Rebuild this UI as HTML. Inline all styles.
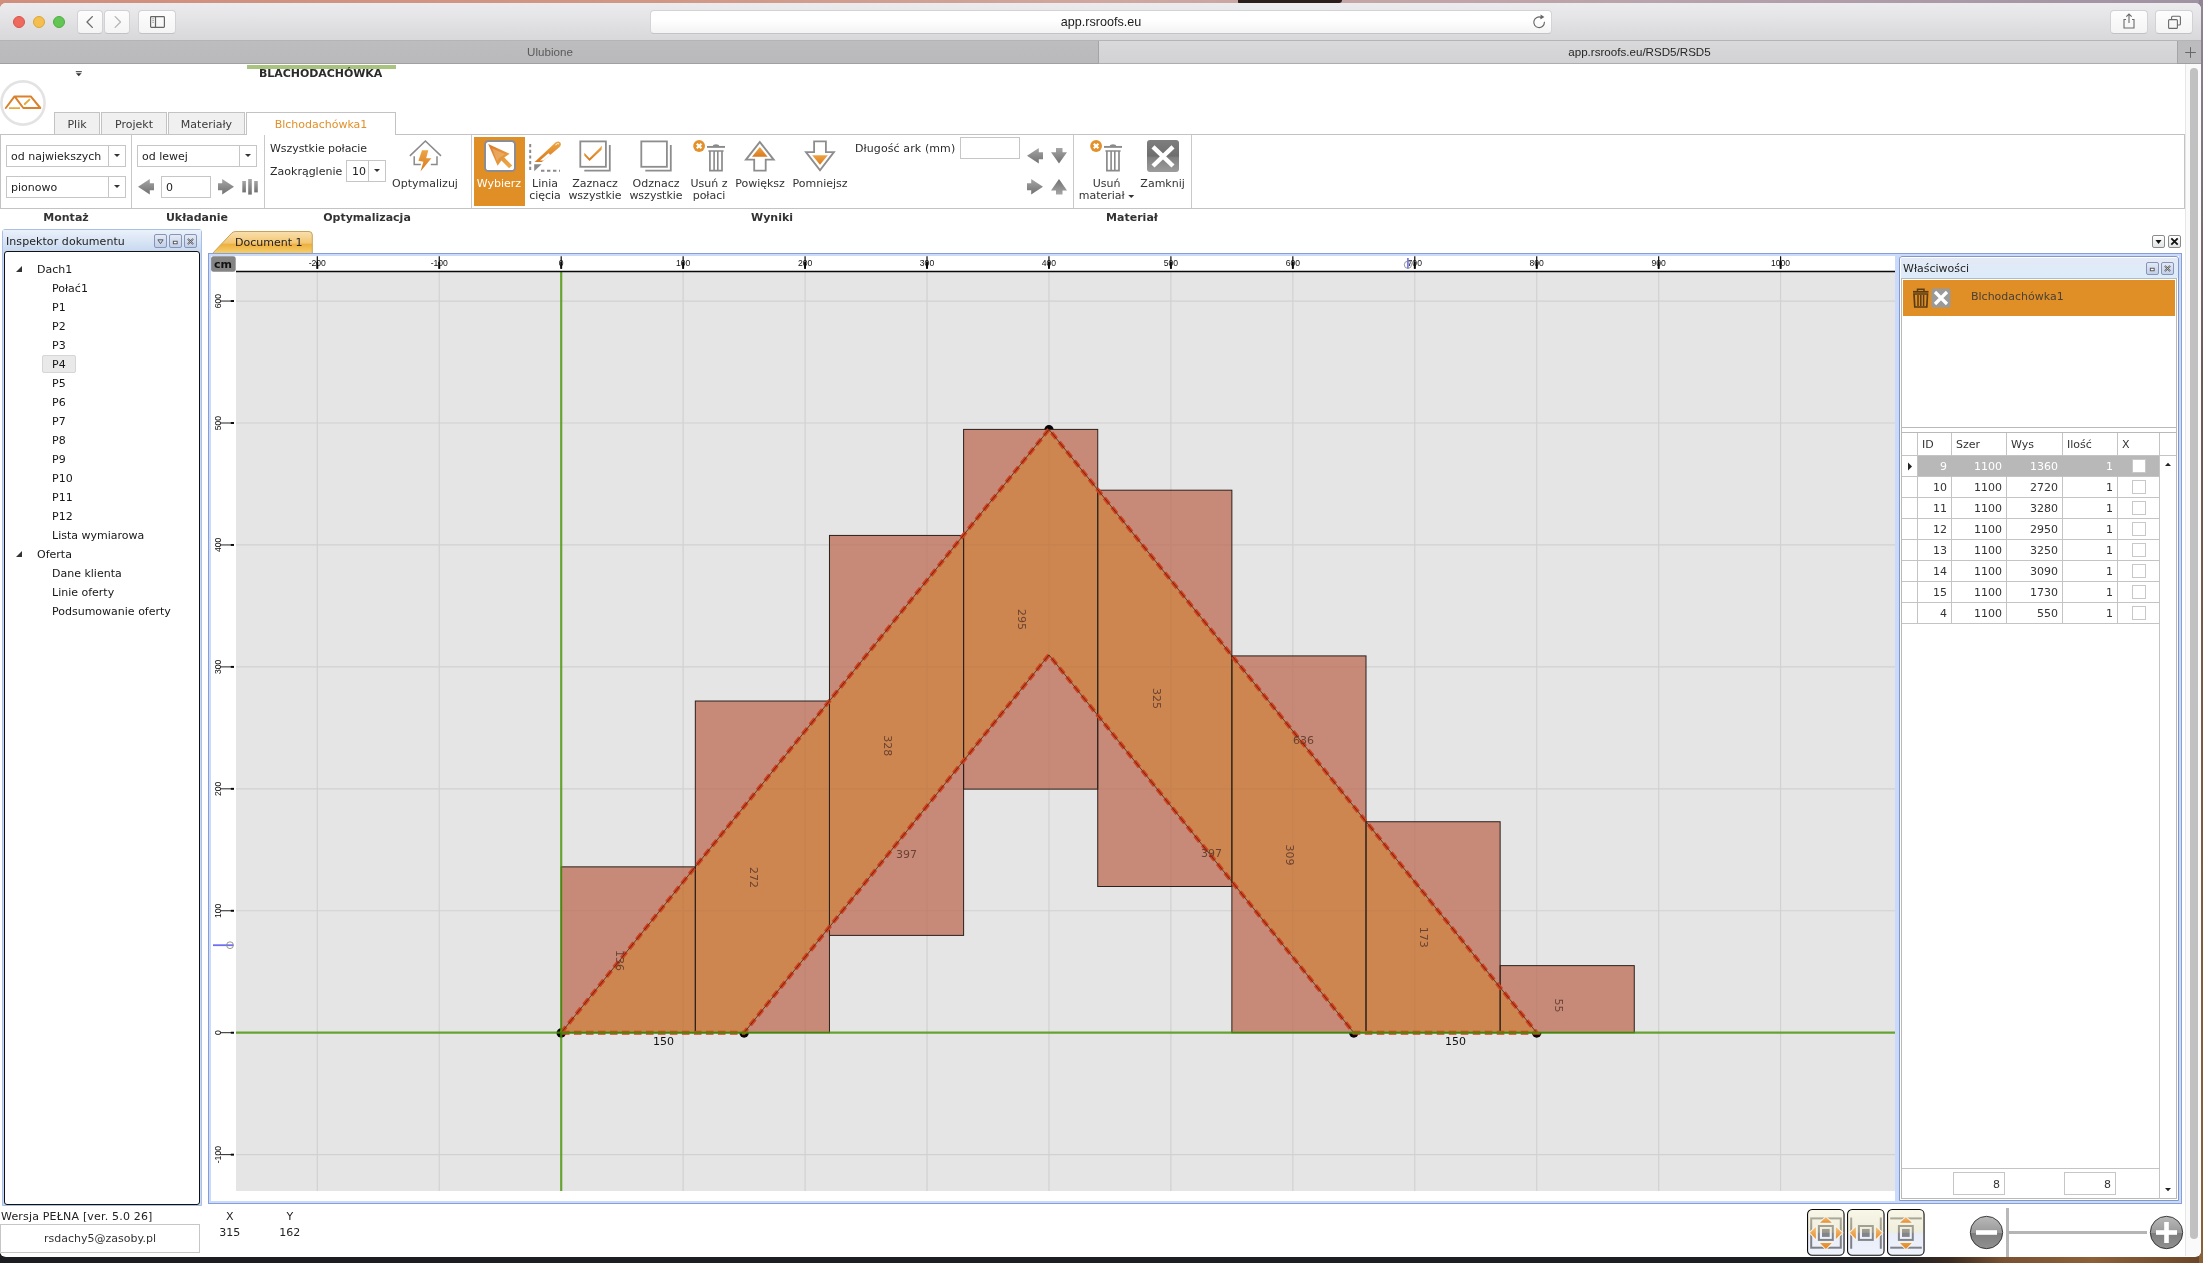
<!DOCTYPE html>
<html lang="pl">
<head>
<meta charset="utf-8">
<title>app.rsroofs.eu/RSD5/RSD5</title>
<style>
*{box-sizing:border-box;margin:0;padding:0}
html,body{width:2203px;height:1263px;overflow:hidden}
body{position:relative;background:#1d1a19;font-family:"DejaVu Sans","Liberation Sans",sans-serif;font-size:11px;color:#2b2b2b}
.abs{position:absolute}
#desk-top{left:0;top:0;width:2203px;height:10px;background:linear-gradient(90deg,#cf8f7c 0%,#d19785 30%,#cfa79f 50%,#b9a3ac 75%,#9f92a2 100%)}
#desk-blob{left:1238px;top:0;width:104px;height:3px;background:#2a1c18;border-radius:0 0 40px 10px}
#desk-bottom{left:0;top:1250px;width:2203px;height:13px;background:linear-gradient(90deg,#1c1d21 0%,#1e1f23 86%,#3a2a20 88.5%,#7a5232 91%,#8c6038 95%,#6a4528 100%)}
#desk-right{left:2199px;top:0;width:4px;height:1263px;background:linear-gradient(180deg,#8f8595 0%,#6c5a5a 30%,#7a5a43 60%,#8a6038 100%)}
#win{will-change:transform;left:0;top:3px;width:2201px;height:1254px;background:#fff;border-radius:6px 6px 6px 6px;overflow:hidden}
/* safari chrome */
#sbar{left:0;top:0;width:2201px;height:38px;background:linear-gradient(180deg,#ececee 0%,#e2e2e4 50%,#d8d8da 100%);border-bottom:1px solid #b4b4b6}
.tl{position:absolute;top:13px;width:12px;height:12px;border-radius:50%}
.sbtn{position:absolute;top:7.3px;height:23.4px;background:linear-gradient(180deg,#fdfdfd,#f4f4f4);border:1px solid #d2d2d4;border-bottom-color:#c2c2c4;border-radius:4px}
#url{left:650px;top:7.3px;width:902px;height:23.4px;background:linear-gradient(180deg,#fff 40%,#f3f3f3);border:1px solid #d4d4d6;border-bottom-color:#c4c4c6;border-radius:4px;font-family:"Liberation Sans",sans-serif;font-size:12.6px;color:#1c1c1c;text-align:center;line-height:22.5px}
#tabs{left:0;top:38px;width:2201px;height:23px;font-family:"Liberation Sans",sans-serif;font-size:11.6px;line-height:22px;text-align:center}
#tab1{left:0;top:0;width:1099px;height:23px;background:linear-gradient(180deg,#bdbdbf,#b9b9bb);color:#5a5a5a;border-right:1px solid #a4a4a6;border-bottom:1px solid #a0a0a2}
#tab2{left:1099px;top:0;width:1078px;height:23px;background:linear-gradient(180deg,#d9d9db,#d2d2d4);color:#262626;border-bottom:1px solid #adadaf}
#tabp{left:2177px;top:0;width:24px;height:23px;background:#bcbcbe;border-left:1px solid #a4a4a6;border-bottom:1px solid #a0a0a2}
</style>
</head>
<body>
<div id="desk-top" class="abs"></div>
<div id="desk-blob" class="abs"></div>
<div id="desk-bottom" class="abs"></div>
<div id="desk-right" class="abs"></div>
<div id="win" class="abs">
<!--CHROME-->
<div id="sbar" class="abs">
  <div class="tl" style="left:13px;background:#ee6a5f;border:0.5px solid #d8544a"></div>
  <div class="tl" style="left:33px;background:#f5bf4f;border:0.5px solid #dba53a"></div>
  <div class="tl" style="left:53px;background:#62c554;border:0.5px solid #4fae42"></div>
  <div class="sbtn" style="left:77px;width:26px"><svg width="24" height="22" viewBox="0 -1 24 22"><path d="M14.3 4.6 L9 10 L14.3 15.4" fill="none" stroke="#6c6c6c" stroke-width="1.35" stroke-linecap="round" stroke-linejoin="round"/></svg></div>
  <div class="sbtn" style="left:104px;width:26px"><svg width="24" height="22" viewBox="0 -1 24 22"><path d="M10.2 4.6 L15.5 10 L10.2 15.4" fill="none" stroke="#b6b6b6" stroke-width="1.35" stroke-linecap="round" stroke-linejoin="round"/></svg></div>
  <div class="sbtn" style="left:138px;width:38px"><svg width="36" height="22" viewBox="0 -1 36 22"><rect x="11.6" y="4.6" width="13.8" height="10.8" rx="0.8" fill="none" stroke="#666" stroke-width="1.2"/><path d="M16.5 4.6 V15.4" stroke="#666" stroke-width="1.2"/><path d="M13.2 6.8h1.8M13.2 8.6h1.8M13.2 10.4h1.8" stroke="#777" stroke-width="0.6"/></svg></div>
  <div id="url" class="abs">app.rsroofs.eu</div>
  <svg class="abs" style="left:1531px;top:11px" width="16" height="16" viewBox="0 0 16 16"><path d="M10.2 3.4 A5.3 5.3 0 1 0 13.4 8.2" fill="none" stroke="#666" stroke-width="1.15" stroke-linecap="round"/><path d="M9.6 0.6 L13.4 3.1 L9.4 5.6 Z" fill="#666"/></svg>
  <div class="sbtn" style="left:2110.3px;width:38px"><svg width="36" height="22" viewBox="0 -1 36 22"><path d="M15 7.5h-2v8.5h10v-8.5h-2" fill="none" stroke="#6a6a6a" stroke-width="1.1"/><path d="M18 2.2V11M15.3 4.6 18 2 20.7 4.6" fill="none" stroke="#6a6a6a" stroke-width="1.1"/></svg></div>
  <div class="sbtn" style="left:2155.2px;width:38px"><svg width="36" height="22" viewBox="0 -1 36 22"><rect x="12.6" y="7.6" width="8.8" height="8.8" rx="1" fill="none" stroke="#6a6a6a" stroke-width="1.1"/><path d="M15.6 7.4V5.2a1 1 0 0 1 1-1h6.8a1 1 0 0 1 1 1V12a1 1 0 0 1-1 1h-2" fill="none" stroke="#6a6a6a" stroke-width="1.1"/></svg></div>
</div>
<div id="tabs" class="abs">
  <div id="tab1" class="abs" style="padding-left:2px">Ulubione</div>
  <div id="tab2" class="abs" style="padding-left:3px">app.rsroofs.eu/RSD5/RSD5</div>
  <div id="tabp" class="abs"><svg width="24" height="22" viewBox="0 0 24 22"><path d="M12.5 6.2v10.6M7.2 11.5h10.6" stroke="#666" stroke-width="1"/></svg></div>
</div>
<!--APP-->
<style>
#app{left:0;top:61px;width:2185px;height:1192px;background:#fff}
.t{position:absolute;white-space:nowrap;line-height:13px}
.b{font-weight:bold}
.c{text-align:center;transform:translateX(-50%)}
.rtab{position:absolute;top:48px;height:22px;background:#f0f0f0;border:1px solid #c3c3c3;border-bottom:none;text-align:center;line-height:23px;color:#3a3a3a}
.combo{position:absolute;height:22px;border:1px solid #c6c6c6;background:#fff;line-height:21px;padding-left:4px;color:#222}
.combo i{position:absolute;right:0;top:0;bottom:0;width:17px;border-left:1px solid #c6c6c6}
.combo i:after{content:"";position:absolute;left:5px;top:8px;border:3px solid transparent;border-top:3.5px solid #333;border-bottom:none}
.sep{position:absolute;top:71px;height:73px;width:1px;background:#c9c9c9}
.ico{position:absolute;top:76px;width:32px;height:32px;overflow:visible}
.lbl{position:absolute;text-align:center;line-height:12px;white-space:nowrap;transform:translateX(-50%);color:#333}
.glbl{position:absolute;top:147px;font-weight:bold;transform:translateX(-50%);white-space:nowrap;color:#333}
</style>
<div id="app" class="abs">
<svg width="0" height="0" style="position:absolute"><defs>
<linearGradient id="gg" x1="0" y1="0" x2="0" y2="1"><stop offset="0" stop-color="#a6a6a6"/><stop offset="1" stop-color="#707070"/></linearGradient>
<linearGradient id="og" x1="0" y1="0" x2="0.5" y2="1"><stop offset="0" stop-color="#eda544"/><stop offset="1" stop-color="#d8791f"/></linearGradient>
<linearGradient id="og2" x1="0" y1="0" x2="0" y2="1"><stop offset="0" stop-color="#eda544"/><stop offset="1" stop-color="#d8791f"/></linearGradient>
<linearGradient id="og3" x1="0" y1="0" x2="1" y2="1"><stop offset="0" stop-color="#d9792a"/><stop offset="1" stop-color="#ecae4c"/></linearGradient>
<linearGradient id="xg" x1="0" y1="0" x2="0" y2="1"><stop offset="0" stop-color="#7e7e7e"/><stop offset="0.5" stop-color="#6e6e6e"/><stop offset="0.55" stop-color="#808080"/><stop offset="1" stop-color="#9c9c9c"/></linearGradient>
<g id="trash"><circle cx="6.1" cy="6" r="5.9" fill="#e4912c"/><path d="M3.8 3.7 L8.4 8.3 M8.4 3.7 L3.8 8.3" stroke="#fff" stroke-width="2.2"/><path d="M14 6.9 H32" stroke="#8a8a8a" stroke-width="1.9"/><path d="M19.8 6.2 Q20 4.3 23 4.3 Q26 4.3 26.2 6.2Z" fill="#8a8a8a"/><path d="M15.4 11 H30.6" stroke="#8a8a8a" stroke-width="1.5"/><path d="M16.9 11 V30.7 H29 V11" fill="none" stroke="#8a8a8a" stroke-width="1.7"/><path d="M21.1 11 V30.5 M24.8 11 V30.5" stroke="#8a8a8a" stroke-width="1.6"/></g>
<path id="arL" d="M0 7.8 L11.8 0 V4.2 H16 V11.2 H11.8 V15.6 Z" fill="url(#gg)"/>
<path id="arD" d="M8 15.6 L0 4.2 H5 V0 H11.5 V4.2 H16 Z" fill="url(#gg)"/>
</defs></svg>
<!-- header -->
<svg class="abs" style="left:75px;top:7px" width="8" height="6" viewBox="0 0 8 6"><path d="M0.8 0.7h6" stroke="#333" stroke-width="1"/><path d="M1 2.3h5.6L3.8 5.2z" fill="#333"/></svg>
<div class="abs" style="left:247px;top:1px;width:149px;height:4px;background:#a8c47f"></div>
<div class="t b" style="left:259px;top:3px;font-size:11px;color:#2b2b2b;letter-spacing:-0.05px">BLACHODACHÓWKA</div>
<svg class="abs" style="left:0;top:16px" width="48" height="48" viewBox="0 0 48 48">
 <circle cx="23" cy="23" r="21.6" fill="#fff" stroke="#e3e3e3" stroke-width="2.6"/>
 <path d="M5.8 28 L14.5 16.4 H30.8 L40.3 28 H23.3 L15 16.8" fill="none" stroke="#d9822b" stroke-width="2" stroke-linejoin="round" stroke-linecap="round"/>
 <path d="M9 28.2 H20" stroke="#e8a83c" stroke-width="1.8"/>
 <path d="M24.8 24 L29.4 19.6" stroke="#e8a83c" stroke-width="2" stroke-linecap="round"/>
</svg>
<!-- ribbon tabs -->
<div class="rtab" style="left:54px;width:46px">Plik</div>
<div class="rtab" style="left:101px;width:66px">Projekt</div>
<div class="rtab" style="left:168px;width:77px">Materiały</div>
<div class="abs" style="left:0;top:70px;width:2185px;height:75px;border:1px solid #c3c3c3;background:#fff"></div>
<div class="rtab" style="left:246px;width:150px;background:#fff;height:23px;color:#e0902a">Blchodachówka1</div>
<!-- group Montaz -->
<div class="combo" style="left:6px;top:81px;width:120px">od najwiekszych<i></i></div>
<div class="combo" style="left:6px;top:112px;width:120px">pionowo<i></i></div>
<div class="sep" style="left:131px"></div>
<!-- group Ukladanie -->
<div class="combo" style="left:137px;top:81px;width:120px">od lewej<i></i></div>
<svg class="abs" style="left:138px;top:115px" width="16" height="16" viewBox="0 0 16 16"><use href="#arL"/></svg>
<div class="combo" style="left:161px;top:112px;width:50px">0</div>
<svg class="abs" style="left:218px;top:115px" width="16" height="16" viewBox="0 0 16 16"><use href="#arL" transform="translate(16 0) scale(-1 1)"/></svg>
<svg class="abs" style="left:241.8px;top:115px" width="18" height="16" viewBox="0 0 18 16"><rect x="0.3" y="2" width="3.6" height="11.4" fill="url(#gg)"/><rect x="6.2" y="0" width="3.6" height="15.6" fill="url(#gg)"/><rect x="12.2" y="2" width="3.6" height="11.4" fill="url(#gg)"/></svg>
<div class="sep" style="left:264px"></div>
<!-- group Optymalizacja -->
<div class="t" style="left:270px;top:78px;letter-spacing:-0.06px">Wszystkie połacie</div>
<div class="t" style="left:270px;top:101px">Zaokrąglenie</div>
<div class="combo" style="left:346px;top:96px;width:40px;padding-left:5px">10<i></i></div>
<svg class="ico" style="left:409.4px" viewBox="0 0 32 32">
 <path d="M0.9 15.9 L16.4 1 L32 15.9" fill="none" stroke="#8a8a8a" stroke-width="1.5"/>
 <path d="M5.2 16.2 V24.6 H11.8 M21.8 24.6 H28 V16.2" fill="none" stroke="#8a8a8a" stroke-width="1.5"/>
 <path d="M13 10.2 H19.3 L17.2 18.3 H22.4 L11.5 31.6 L14.4 21.7 L9.4 20.8 Z" fill="url(#og2)"/>
</svg>
<div class="lbl" style="left:425px;top:114px">Optymalizuj</div>
<div class="sep" style="left:471px"></div>
<!-- group Wyniki -->
<div class="abs" style="left:474px;top:73px;width:51px;height:69px;background:#e08f27"></div>
<svg class="ico" style="left:484px" viewBox="0 0 32 32"><rect x="1" y="1" width="30" height="30" rx="3.6" fill="#fff" stroke="#8d8d8d" stroke-width="2"/><path d="M4.2 3.9 L25.6 13.8 L20.3 17.6 L28.2 25.4 L25.1 28.2 L17.4 20.5 L13.6 25.8 Z" fill="url(#og3)"/><path d="M8 8.2 L21 14.2 L15 18 L13 21.2 Z" fill="#f3c489" fill-opacity="0.45"/></svg>
<div class="lbl" style="left:499px;top:114px;color:#fff">Wybierz</div>
<svg class="ico" style="left:529px" viewBox="0 0 32 32"><path d="M1.2 4 V31.6" fill="none" stroke="#8a8a8a" stroke-width="2" stroke-dasharray="3.2 2.5"/><path d="M12 30.8 H31" fill="none" stroke="#8a8a8a" stroke-width="2" stroke-dasharray="3.4 2.6"/><path d="M5.2 24.3 H12.6 L5.2 31.2 Z" fill="#8a8a8a"/><path d="M5.6 22 L26.5 2.6 Q29.4 0.6 31.2 2.5 Q32.8 4.6 30.6 7 L12.8 22 Z" fill="url(#og2)"/><path d="M11 20.6 L19.5 13.2 L21.4 15.1 L14.6 20.6 Z" fill="#fff"/><path d="M26.8 4.6 Q28.6 3 29.6 3.6" fill="none" stroke="#fff" stroke-width="1" stroke-linecap="round"/></svg>
<div class="lbl" style="left:545px;top:114px">Linia<br>cięcia</div>
<svg class="ico" style="left:579px" viewBox="0 0 32 32"><path d="M5.3 30.6 H30.8 V5" fill="none" stroke="#8d8d8d" stroke-width="1.8"/><rect x="1.3" y="1.4" width="25.6" height="25.4" fill="#fff" stroke="#8d8d8d" stroke-width="1.8"/><path d="M5.3 12.8 L10.5 18.2 L23 5.7 L22.5 9.7 L10.5 20.9 L5.3 15.4 Z" fill="url(#og2)"/></svg>
<div class="lbl" style="left:595px;top:114px">Zaznacz<br>wszystkie</div>
<svg class="ico" style="left:639.8px" viewBox="0 0 32 32"><path d="M5.3 30.6 H30.8 V5" fill="none" stroke="#8d8d8d" stroke-width="1.8"/><rect x="1.3" y="1.4" width="25.6" height="25.4" fill="#fff" stroke="#8d8d8d" stroke-width="1.8"/></svg>
<div class="lbl" style="left:656px;top:114px">Odznacz<br>wszystkie</div>
<svg class="ico" style="left:693px" viewBox="0 0 32 32"><use href="#trash"/></svg>
<div class="lbl" style="left:709px;top:114px">Usuń z<br>połaci</div>
<svg class="ico" style="left:744.2px" viewBox="0 0 32 32"><path d="M15.8 0.4 L31.6 20.6 H22.6 V31.6 H9.3 V20.6 H0 Z" fill="#8d8d8d"/><path d="M15.8 3.5 L27.7 18.8 H20.8 V29.8 H11.1 V18.8 H3.9 Z" fill="#fff"/><path d="M15.8 7 L23.6 16.8 H8 Z" fill="url(#og2)"/></svg>
<div class="lbl" style="left:760px;top:114px">Powiększ</div>
<svg class="ico" style="left:804px" viewBox="0 0 32 32"><path d="M16 31.7 L31.8 11.2 H22.8 V0.4 H9.2 V11.2 H0.1 Z" fill="#8d8d8d"/><path d="M16 28.7 L28 13 H21 V2.2 H11 V13 H3.9 Z" fill="#fff"/><path d="M16 24.8 L23.8 15.2 H8.2 Z" fill="url(#og2)"/></svg>
<div class="lbl" style="left:820px;top:114px">Pomniejsz</div>
<div class="t" style="left:855px;top:78px;letter-spacing:0.1px">Długość ark (mm)</div>
<div class="abs" style="left:960px;top:73px;width:60px;height:22px;border:1px solid #c6c6c6;background:#fff"></div>
<svg class="abs" style="left:1027px;top:84.3px" width="16" height="16" viewBox="0 0 16 16"><use href="#arL"/></svg>
<svg class="abs" style="left:1051px;top:84.3px" width="16" height="16" viewBox="0 0 16 16"><use href="#arD"/></svg>
<svg class="abs" style="left:1027px;top:115.3px" width="16" height="16" viewBox="0 0 16 16"><use href="#arL" transform="translate(16 0) scale(-1 1)"/></svg>
<svg class="abs" style="left:1051px;top:115.3px" width="16" height="16" viewBox="0 0 16 16"><use href="#arD" transform="translate(0 15.6) scale(1 -1)"/></svg>
<div class="sep" style="left:1073px"></div>
<!-- group Material -->
<svg class="ico" style="left:1089.8px" viewBox="0 0 32 32"><use href="#trash"/></svg>
<div class="lbl" style="left:1106.5px;top:114px">Usuń<br>materiał&nbsp;<span style="display:inline-block;border:3px solid transparent;border-top:3.5px solid #333;border-bottom:none;vertical-align:1px"></span></div>
<svg class="ico" style="left:1147px" viewBox="0 0 32 32"><rect x="0" y="0.1" width="32" height="31.9" rx="3" fill="url(#xg)"/><path d="M6 6.8 L26 26 M26 6.8 L6 26" stroke="#fff" stroke-width="4.4"/></svg>
<div class="lbl" style="left:1162.6px;top:114px">Zamknij</div>
<div class="sep" style="left:1191px"></div>
<!-- group labels -->
<div class="glbl" style="left:66px">Montaż</div>
<div class="glbl" style="left:197px">Układanie</div>
<div class="glbl" style="left:367px">Optymalizacja</div>
<div class="glbl" style="left:772px">Wyniki</div>
<div class="glbl" style="left:1132px">Materiał</div>
<!--RIBBONEND-->
<style>
.pbtn{position:absolute;width:13px;height:13.6px;border:1px solid #8794b6;border-radius:2px;background:linear-gradient(180deg,#e3eaf6,#c1cfe8);padding-top:0.8px}
.tree{position:absolute;left:0;margin-top:1.7px;line-height:19px;height:19px;white-space:nowrap;color:#161616}
.hd{position:absolute;background:linear-gradient(180deg,#eaf1fa 0%,#dbe6f5 45%,#c6d8ef 100%)}
.rl{font-family:"Liberation Sans",sans-serif;font-size:8.6px;fill:#111}
.gcell{position:absolute;height:21px;border-right:1px solid #c4c4c4;border-bottom:1px solid #c4c4c4;line-height:21px;text-align:right;padding-right:4px;color:#333}
.ghd{position:absolute;top:0;height:23px;border-right:1px solid #c4c4c4;border-bottom:1px solid #c4c4c4;line-height:23px;padding-left:4px;color:#333}
.chk{position:absolute;left:14px;top:2.7px;width:14px;height:14px;border:1px solid #c8c8c8;background:#fff}
</style>
<div class="abs" style="left:2px;top:165px;width:200px;height:977px;border:1px solid #a9bfe4;border-radius:3px 3px 0 0;background:#c9daf2"></div>
<div class="hd" style="left:3px;top:166px;width:198px;height:22px"></div>
<div class="t" style="left:6px;top:170.7px;color:#222;letter-spacing:0.07px">Inspektor dokumentu</div>
<div class="pbtn" style="left:154px;top:170px"><svg width="11" height="11" viewBox="0 0 11.5 11.5" style="display:block"><path d="M3 4h5.5L5.75 8z" fill="none" stroke="#555" stroke-width="1"/></svg></div>
<div class="pbtn" style="left:169px;top:170px"><svg width="11" height="11" viewBox="0 0 11.5 11.5" style="display:block"><rect x="3.5" y="5.5" width="4" height="2.6" fill="#fff" stroke="#555" stroke-width="1"/></svg></div>
<div class="pbtn" style="left:184px;top:170px"><svg width="11" height="11" viewBox="0 0 11.5 11.5" style="display:block"><path d="M3 3l5.5 5.5M8.5 3L3 8.5" stroke="#555" stroke-width="1.8"/><path d="M3 3l5.5 5.5M8.5 3L3 8.5" stroke="#ddd" stroke-width="0.6"/></svg></div>
<div class="abs" style="left:4px;top:187px;width:196px;height:953.8px;border:1.3px solid #111;border-radius:3px;background:#fff"></div>
<svg class="abs" style="left:15px;top:201.3px" width="8" height="8" viewBox="0 0 8 8"><path d="M7 1V7H1z" fill="#333"/></svg>
<div class="tree" style="left:37px;top:194.5px">Dach1</div>
<div class="tree" style="left:52px;top:213.5px">Połać1</div>
<div class="tree" style="left:52px;top:232.5px">P1</div>
<div class="tree" style="left:52px;top:251.5px">P2</div>
<div class="tree" style="left:52px;top:270.5px">P3</div>
<div class="abs" style="left:42px;top:290.5px;width:34px;height:18px;background:#e9e9e9;border:1px solid #d6d6d6;border-radius:2px"></div>
<div class="tree" style="left:52px;top:289.5px">P4</div>
<div class="tree" style="left:52px;top:308.5px">P5</div>
<div class="tree" style="left:52px;top:327.5px">P6</div>
<div class="tree" style="left:52px;top:346.5px">P7</div>
<div class="tree" style="left:52px;top:365.5px">P8</div>
<div class="tree" style="left:52px;top:384.5px">P9</div>
<div class="tree" style="left:52px;top:403.5px">P10</div>
<div class="tree" style="left:52px;top:422.5px">P11</div>
<div class="tree" style="left:52px;top:441.5px">P12</div>
<div class="tree" style="left:52px;top:460.5px">Lista wymiarowa</div>
<svg class="abs" style="left:15px;top:486.3px" width="8" height="8" viewBox="0 0 8 8"><path d="M7 1V7H1z" fill="#333"/></svg>
<div class="tree" style="left:37px;top:479.5px">Oferta</div>
<div class="tree" style="left:52px;top:498.5px">Dane klienta</div>
<div class="tree" style="left:52px;top:517.5px">Linie oferty</div>
<div class="tree" style="left:52px;top:536.5px">Podsumowanie oferty</div>
<svg class="abs" style="left:209px;top:166px" width="108" height="26" viewBox="0 0 108 26"><defs><linearGradient id="tg" x1="0" y1="0" x2="0" y2="1"><stop offset="0" stop-color="#f8e0b0"/><stop offset="0.5" stop-color="#f3c672"/><stop offset="0.56" stop-color="#eeb040"/><stop offset="1" stop-color="#f5d475"/></linearGradient></defs><path d="M2.5 24.5 L23 2.8 Q24.5 1.5 27 1.5 H100 Q103.3 1.5 103.3 5 V24.5 Z" fill="url(#tg)" stroke="#c9a25a" stroke-width="1"/></svg>
<div class="t" style="left:235px;top:172px;color:#222">Document 1</div>
<div class="abs" style="left:2152px;top:171px;width:13px;height:13px;border:1px solid #8a8a8a;border-radius:2px;background:linear-gradient(180deg,#fff,#e4e4e4)"><svg width="11" height="11" viewBox="0 0 11 11" style="display:block"><path d="M2.5 4h6L5.5 8z" fill="#111"/></svg></div>
<div class="abs" style="left:2168px;top:171px;width:13px;height:13px;border:1px solid #8a8a8a;border-radius:2px;background:linear-gradient(180deg,#fff,#e4e4e4)"><svg width="11" height="11" viewBox="0 0 11 11" style="display:block"><path d="M2.3 2.3l6.4 6.4M8.7 2.3L2.3 8.7" stroke="#111" stroke-width="1.8"/></svg></div>
<div class="abs" style="left:208px;top:189px;width:1974px;height:951px;border:1px solid #879fd6;box-shadow:inset 0 0 0 2px #c9dafa;background:#fff"></div>
<!--CANVAS-->
<svg class="abs" style="left:209px;top:191px" width="1688" height="945" viewBox="0 0 1688 945" font-family="DejaVu Sans, sans-serif">
<rect x="27" y="17" width="1659" height="919" fill="#e5e5e5"/>
<path d="M108.32 17V936M230.26 17V936M352.2 17V936M474.14 17V936M596.08 17V936M718.02 17V936M839.96 17V936M961.9 17V936M1083.84 17V936M1205.78 17V936M1327.72 17V936M1449.66 17V936M1571.6 17V936M27 899.64H1686M27 777.7H1686M27 655.76H1686M27 533.82H1686M27 411.88H1686M27 289.94H1686M27 168.0H1686M27 46.06H1686" stroke="#d9d9d9" stroke-width="1.2" fill="none"/>
<circle cx="352.2" cy="778.0" r="4.7" fill="#050505"/>
<circle cx="535.11" cy="778.0" r="4.7" fill="#050505"/>
<circle cx="1144.81" cy="778.0" r="4.7" fill="#050505"/>
<circle cx="1327.72" cy="778.0" r="4.7" fill="#050505"/>
<circle cx="839.96" cy="174.7" r="4.7" fill="#050505"/>
<rect x="352.2" y="611.86" width="134.13" height="165.84" fill="#c88a78"/>
<rect x="486.33" y="446.02" width="134.13" height="331.68" fill="#c88a78"/>
<rect x="620.47" y="280.43" width="134.13" height="399.96" fill="#c88a78"/>
<rect x="754.6" y="174.4" width="134.13" height="359.72" fill="#c88a78"/>
<rect x="888.74" y="235.19" width="134.13" height="396.31" fill="#c88a78"/>
<rect x="1022.87" y="400.91" width="134.13" height="376.79" fill="#c88a78"/>
<rect x="1157.0" y="566.74" width="134.13" height="210.96" fill="#c88a78"/>
<rect x="1291.14" y="710.63" width="134.13" height="67.07" fill="#c88a78"/>
<polygon points="352.2,777.7 839.96,174.4 1327.72,777.7 1144.81,777.7 839.96,399.93 535.11,777.7" fill="#cd8650"/>
<path d="M108.32 17V936M230.26 17V936M352.2 17V936M474.14 17V936M596.08 17V936M718.02 17V936M839.96 17V936M961.9 17V936M1083.84 17V936M1205.78 17V936M1327.72 17V936M1449.66 17V936M1571.6 17V936M27 899.64H1686M27 777.7H1686M27 655.76H1686M27 533.82H1686M27 411.88H1686M27 289.94H1686M27 168.0H1686M27 46.06H1686" stroke="#000" stroke-opacity="0.035" stroke-width="1.2" fill="none"/>
<rect x="352.2" y="611.86" width="134.13" height="165.84" fill="none" stroke="#2b211c" stroke-width="1"/>
<rect x="486.33" y="446.02" width="134.13" height="331.68" fill="none" stroke="#2b211c" stroke-width="1"/>
<rect x="620.47" y="280.43" width="134.13" height="399.96" fill="none" stroke="#2b211c" stroke-width="1"/>
<rect x="754.6" y="174.4" width="134.13" height="359.72" fill="none" stroke="#2b211c" stroke-width="1"/>
<rect x="888.74" y="235.19" width="134.13" height="396.31" fill="none" stroke="#2b211c" stroke-width="1"/>
<rect x="1022.87" y="400.91" width="134.13" height="376.79" fill="none" stroke="#2b211c" stroke-width="1"/>
<rect x="1157.0" y="566.74" width="134.13" height="210.96" fill="none" stroke="#2b211c" stroke-width="1"/>
<rect x="1291.14" y="710.63" width="134.13" height="67.07" fill="none" stroke="#2b211c" stroke-width="1"/>
<polygon points="352.2,777.7 839.96,174.4 1327.72,777.7 1144.81,777.7 839.96,399.93 535.11,777.7" fill="none" stroke="#d2411f" stroke-width="4" stroke-dasharray="7.6 4.4"/>
<polygon points="352.2,777.7 839.96,174.4 1327.72,777.7 1144.81,777.7 839.96,399.93 535.11,777.7" fill="none" stroke="#4a2616" stroke-width="0.8"/>
<path d="M352.2 17V936M27 777.7H1686" stroke="#4a9608" stroke-opacity="0.8" stroke-width="2.2" fill="none"/>
<text x="410.7" y="709.6" font-size="11" text-anchor="middle" fill="#5e3a2c" fill-opacity="0.9" transform="rotate(90 410.7 705.6)">136</text>
<text x="544.7" y="626.5" font-size="11" text-anchor="middle" fill="#5e3a2c" fill-opacity="0.9" transform="rotate(90 544.7 622.5)">272</text>
<text x="679.2" y="494.7" font-size="11" text-anchor="middle" fill="#5e3a2c" fill-opacity="0.9" transform="rotate(90 679.2 490.7)">328</text>
<text x="697.6" y="602.5" font-size="11" text-anchor="middle" fill="#5e3a2c" fill-opacity="0.9">397</text>
<text x="813.0" y="368.4" font-size="11" text-anchor="middle" fill="#5e3a2c" fill-opacity="0.9" transform="rotate(90 813.0 364.4)">295</text>
<text x="947.9" y="447.5" font-size="11" text-anchor="middle" fill="#5e3a2c" fill-opacity="0.9" transform="rotate(90 947.9 443.5)">325</text>
<text x="1094.4" y="488.8" font-size="11" text-anchor="middle" fill="#5e3a2c" fill-opacity="0.9">636</text>
<text x="1002.6" y="602.2" font-size="11" text-anchor="middle" fill="#5e3a2c" fill-opacity="0.9">397</text>
<text x="1081.3" y="603.9" font-size="11" text-anchor="middle" fill="#5e3a2c" fill-opacity="0.9" transform="rotate(90 1081.3 599.9)">309</text>
<text x="1215.3" y="686.3" font-size="11" text-anchor="middle" fill="#5e3a2c" fill-opacity="0.9" transform="rotate(90 1215.3 682.3)">173</text>
<text x="1349.8" y="754.5" font-size="11" text-anchor="middle" fill="#5e3a2c" fill-opacity="0.9" transform="rotate(90 1349.8 750.5)">55</text>
<text x="454.4" y="790.3" font-size="11" text-anchor="middle" fill="#111" fill-opacity="1">150</text>
<text x="1246.6" y="790.3" font-size="11" text-anchor="middle" fill="#111" fill-opacity="1">150</text>
<rect x="2.1" y="1.2" width="24.6" height="15.6" rx="2.4" fill="#848484"/>
<text x="13.9" y="12.7" font-size="11" font-weight="bold" text-anchor="middle" fill="#111">cm</text>
<path d="M27 16.5H1686" stroke="#0a0a0a" stroke-width="1.6"/>
<text class="rl" x="108.32" y="10.9" text-anchor="middle">-200</text>
<path d="M108.32 1.2V13.8" stroke="#0a0a0a" stroke-width="1.2"/><path d="M108.32 7V13.8" stroke="#0a0a0a" stroke-width="1.9"/>
<text class="rl" x="230.26" y="10.9" text-anchor="middle">-100</text>
<path d="M230.26 1.2V13.8" stroke="#0a0a0a" stroke-width="1.2"/><path d="M230.26 7V13.8" stroke="#0a0a0a" stroke-width="1.9"/>
<text class="rl" x="352.2" y="10.9" text-anchor="middle">0</text>
<path d="M352.2 1.2V13.8" stroke="#0a0a0a" stroke-width="1.2"/><path d="M352.2 7V13.8" stroke="#0a0a0a" stroke-width="1.9"/>
<text class="rl" x="474.14" y="10.9" text-anchor="middle">100</text>
<path d="M474.14 1.2V13.8" stroke="#0a0a0a" stroke-width="1.2"/><path d="M474.14 7V13.8" stroke="#0a0a0a" stroke-width="1.9"/>
<text class="rl" x="596.08" y="10.9" text-anchor="middle">200</text>
<path d="M596.08 1.2V13.8" stroke="#0a0a0a" stroke-width="1.2"/><path d="M596.08 7V13.8" stroke="#0a0a0a" stroke-width="1.9"/>
<text class="rl" x="718.02" y="10.9" text-anchor="middle">300</text>
<path d="M718.02 1.2V13.8" stroke="#0a0a0a" stroke-width="1.2"/><path d="M718.02 7V13.8" stroke="#0a0a0a" stroke-width="1.9"/>
<text class="rl" x="839.96" y="10.9" text-anchor="middle">400</text>
<path d="M839.96 1.2V13.8" stroke="#0a0a0a" stroke-width="1.2"/><path d="M839.96 7V13.8" stroke="#0a0a0a" stroke-width="1.9"/>
<text class="rl" x="961.9" y="10.9" text-anchor="middle">500</text>
<path d="M961.9 1.2V13.8" stroke="#0a0a0a" stroke-width="1.2"/><path d="M961.9 7V13.8" stroke="#0a0a0a" stroke-width="1.9"/>
<text class="rl" x="1083.84" y="10.9" text-anchor="middle">600</text>
<path d="M1083.84 1.2V13.8" stroke="#0a0a0a" stroke-width="1.2"/><path d="M1083.84 7V13.8" stroke="#0a0a0a" stroke-width="1.9"/>
<text class="rl" x="1205.78" y="10.9" text-anchor="middle">700</text>
<path d="M1205.78 1.2V13.8" stroke="#0a0a0a" stroke-width="1.2"/><path d="M1205.78 7V13.8" stroke="#0a0a0a" stroke-width="1.9"/>
<text class="rl" x="1327.72" y="10.9" text-anchor="middle">800</text>
<path d="M1327.72 1.2V13.8" stroke="#0a0a0a" stroke-width="1.2"/><path d="M1327.72 7V13.8" stroke="#0a0a0a" stroke-width="1.9"/>
<text class="rl" x="1449.66" y="10.9" text-anchor="middle">900</text>
<path d="M1449.66 1.2V13.8" stroke="#0a0a0a" stroke-width="1.2"/><path d="M1449.66 7V13.8" stroke="#0a0a0a" stroke-width="1.9"/>
<text class="rl" x="1571.6" y="10.9" text-anchor="middle">1000</text>
<path d="M1571.6 1.2V13.8" stroke="#0a0a0a" stroke-width="1.2"/><path d="M1571.6 7V13.8" stroke="#0a0a0a" stroke-width="1.9"/>
<text class="rl" x="8.7" y="902.74" text-anchor="middle" transform="rotate(-90 8.7 899.64)">-100</text>
<path d="M11.2 899.64H25" stroke="#222" stroke-width="1"/><path d="M21.8 899.64H25" stroke="#0a0a0a" stroke-width="1.9"/>
<text class="rl" x="8.7" y="780.8000000000001" text-anchor="middle" transform="rotate(-90 8.7 777.7)">0</text>
<path d="M11.2 777.7H25" stroke="#222" stroke-width="1"/><path d="M21.8 777.7H25" stroke="#0a0a0a" stroke-width="1.9"/>
<text class="rl" x="8.7" y="658.86" text-anchor="middle" transform="rotate(-90 8.7 655.76)">100</text>
<path d="M11.2 655.76H25" stroke="#222" stroke-width="1"/><path d="M21.8 655.76H25" stroke="#0a0a0a" stroke-width="1.9"/>
<text class="rl" x="8.7" y="536.9200000000001" text-anchor="middle" transform="rotate(-90 8.7 533.82)">200</text>
<path d="M11.2 533.82H25" stroke="#222" stroke-width="1"/><path d="M21.8 533.82H25" stroke="#0a0a0a" stroke-width="1.9"/>
<text class="rl" x="8.7" y="414.98" text-anchor="middle" transform="rotate(-90 8.7 411.88)">300</text>
<path d="M11.2 411.88H25" stroke="#222" stroke-width="1"/><path d="M21.8 411.88H25" stroke="#0a0a0a" stroke-width="1.9"/>
<text class="rl" x="8.7" y="293.04" text-anchor="middle" transform="rotate(-90 8.7 289.94)">400</text>
<path d="M11.2 289.94H25" stroke="#222" stroke-width="1"/><path d="M21.8 289.94H25" stroke="#0a0a0a" stroke-width="1.9"/>
<text class="rl" x="8.7" y="171.1" text-anchor="middle" transform="rotate(-90 8.7 168.0)">500</text>
<path d="M11.2 168.0H25" stroke="#222" stroke-width="1"/><path d="M21.8 168.0H25" stroke="#0a0a0a" stroke-width="1.9"/>
<text class="rl" x="8.7" y="49.160000000000004" text-anchor="middle" transform="rotate(-90 8.7 46.06)">600</text>
<path d="M11.2 46.06H25" stroke="#222" stroke-width="1"/><path d="M21.8 46.06H25" stroke="#0a0a0a" stroke-width="1.9"/>
<path d="M1198.9 3V13.4" stroke="#7474f4" stroke-width="1.7"/><circle cx="1198.9" cy="9.8" r="3.6" fill="none" stroke="#8a8a8a" stroke-width="0.9"/>
<path d="M4 690.2H24.3" stroke="#6f6ff2" stroke-width="1.8"/><circle cx="21" cy="690.2" r="3.4" fill="none" stroke="#8a8a8a" stroke-width="0.9"/>
</svg>
<!--/CANVAS-->
<!--PROPS-->
<div class="abs" style="left:1895px;top:192px;width:5px;height:947px;background:#c9dafa"></div>
<div class="abs" style="left:1899px;top:192px;width:280px;height:944.5px;border:1px solid #8398c8;border-radius:3px 3px 0 0;background:#fff"></div>
<div class="abs" style="left:2179px;top:192px;width:2px;height:947px;background:#c9dafa"></div>
<div class="abs" style="left:1895px;top:1136.5px;width:286px;height:2.5px;background:#c9dafa"></div>
<div class="abs" style="left:1901px;top:193.5px;width:277px;height:20.5px;background:linear-gradient(180deg,#e4e9f5,#dcecfa)"></div>
<div class="t" style="left:1903px;top:198px;color:#222">Właściwości</div>
<div class="pbtn" style="left:2146px;top:197.5px"><svg width="11" height="11" viewBox="0 0 11.5 11.5" style="display:block"><rect x="3.5" y="5.5" width="4" height="2.6" fill="#fff" stroke="#555" stroke-width="1"/></svg></div>
<div class="pbtn" style="left:2161px;top:197.5px"><svg width="11" height="11" viewBox="0 0 11.5 11.5" style="display:block"><path d="M3 3l5.5 5.5M8.5 3L3 8.5" stroke="#555" stroke-width="1.8"/><path d="M3 3l5.5 5.5M8.5 3L3 8.5" stroke="#ddd" stroke-width="0.6"/></svg></div>
<div class="abs" style="left:1901px;top:214px;width:276px;height:921px;background:#fff;border-left:1px solid #b9b9b9;border-right:1px solid #b9b9b9"></div>
<div class="abs" style="left:1901px;top:214px;width:276px;height:150px;border:1px solid #b9b9b9;background:#fff"></div>
<div class="abs" style="left:1903px;top:216px;width:272px;height:35.5px;background:#e08f27"></div>
<svg class="abs" style="left:1911px;top:223px" width="20" height="21" viewBox="0 0 20 21"><path d="M2 4.8H17.5" stroke="#5a3c14" stroke-width="1.8"/><path d="M6.5 4V2.3H13V4" fill="none" stroke="#5a3c14" stroke-width="1.5"/><path d="M3 7H16.5L15.8 20H3.8Z" fill="none" stroke="#5a3c14" stroke-width="1.7"/><path d="M7 8V19M9.8 8V19M12.6 8V19" stroke="#5a3c14" stroke-width="1.5"/></svg>
<svg class="abs" style="left:1931px;top:224px" width="20" height="20" viewBox="0 0 20 20"><rect x="0.5" y="0.5" width="19" height="19" rx="1.5" fill="#9a9a9a"/><path d="M4 4L16 16M16 4L4 16" stroke="#fff" stroke-width="3.2"/></svg>
<div class="t" style="left:1971px;top:226px;color:#4a4036">Blchodachówka1</div>
<div class="abs" style="left:1901px;top:368px;width:276px;height:767px;border:1px solid #b9b9b9;background:#fff"></div>
<div class="ghd" style="left:1902px;top:369px;width:16px;"></div>
<div class="ghd" style="left:1918px;top:369px;width:34px;">ID</div>
<div class="ghd" style="left:1952px;top:369px;width:55px;">Szer</div>
<div class="ghd" style="left:2007px;top:369px;width:56px;">Wys</div>
<div class="ghd" style="left:2063px;top:369px;width:55px;">Ilość</div>
<div class="ghd" style="left:2118px;top:369px;width:42px;">X</div>
<div class="ghd" style="left:2160px;top:369px;width:16px;border-right:none;"></div>
<div class="gcell" style="left:1902px;top:392px;width:16px"></div>
<div class="gcell" style="left:1918px;top:392px;width:34px;background:#b8b8b8;color:#fff;border-right-color:#b8b8b8;">9</div>
<div class="gcell" style="left:1952px;top:392px;width:55px;background:#b8b8b8;color:#fff;border-right-color:#b8b8b8;">1100</div>
<div class="gcell" style="left:2007px;top:392px;width:56px;background:#b8b8b8;color:#fff;border-right-color:#b8b8b8;">1360</div>
<div class="gcell" style="left:2063px;top:392px;width:55px;background:#b8b8b8;color:#fff;border-right-color:#b8b8b8;">1</div>
<div class="gcell" style="left:2118px;top:392px;width:42px;background:#b8b8b8;color:#fff;border-right-color:#b8b8b8;"><div class="chk"></div></div>
<div class="gcell" style="left:1902px;top:413px;width:16px"></div>
<div class="gcell" style="left:1918px;top:413px;width:34px;">10</div>
<div class="gcell" style="left:1952px;top:413px;width:55px;">1100</div>
<div class="gcell" style="left:2007px;top:413px;width:56px;">2720</div>
<div class="gcell" style="left:2063px;top:413px;width:55px;">1</div>
<div class="gcell" style="left:2118px;top:413px;width:42px;"><div class="chk"></div></div>
<div class="gcell" style="left:1902px;top:434px;width:16px"></div>
<div class="gcell" style="left:1918px;top:434px;width:34px;">11</div>
<div class="gcell" style="left:1952px;top:434px;width:55px;">1100</div>
<div class="gcell" style="left:2007px;top:434px;width:56px;">3280</div>
<div class="gcell" style="left:2063px;top:434px;width:55px;">1</div>
<div class="gcell" style="left:2118px;top:434px;width:42px;"><div class="chk"></div></div>
<div class="gcell" style="left:1902px;top:455px;width:16px"></div>
<div class="gcell" style="left:1918px;top:455px;width:34px;">12</div>
<div class="gcell" style="left:1952px;top:455px;width:55px;">1100</div>
<div class="gcell" style="left:2007px;top:455px;width:56px;">2950</div>
<div class="gcell" style="left:2063px;top:455px;width:55px;">1</div>
<div class="gcell" style="left:2118px;top:455px;width:42px;"><div class="chk"></div></div>
<div class="gcell" style="left:1902px;top:476px;width:16px"></div>
<div class="gcell" style="left:1918px;top:476px;width:34px;">13</div>
<div class="gcell" style="left:1952px;top:476px;width:55px;">1100</div>
<div class="gcell" style="left:2007px;top:476px;width:56px;">3250</div>
<div class="gcell" style="left:2063px;top:476px;width:55px;">1</div>
<div class="gcell" style="left:2118px;top:476px;width:42px;"><div class="chk"></div></div>
<div class="gcell" style="left:1902px;top:497px;width:16px"></div>
<div class="gcell" style="left:1918px;top:497px;width:34px;">14</div>
<div class="gcell" style="left:1952px;top:497px;width:55px;">1100</div>
<div class="gcell" style="left:2007px;top:497px;width:56px;">3090</div>
<div class="gcell" style="left:2063px;top:497px;width:55px;">1</div>
<div class="gcell" style="left:2118px;top:497px;width:42px;"><div class="chk"></div></div>
<div class="gcell" style="left:1902px;top:518px;width:16px"></div>
<div class="gcell" style="left:1918px;top:518px;width:34px;">15</div>
<div class="gcell" style="left:1952px;top:518px;width:55px;">1100</div>
<div class="gcell" style="left:2007px;top:518px;width:56px;">1730</div>
<div class="gcell" style="left:2063px;top:518px;width:55px;">1</div>
<div class="gcell" style="left:2118px;top:518px;width:42px;"><div class="chk"></div></div>
<div class="gcell" style="left:1902px;top:539px;width:16px"></div>
<div class="gcell" style="left:1918px;top:539px;width:34px;">4</div>
<div class="gcell" style="left:1952px;top:539px;width:55px;">1100</div>
<div class="gcell" style="left:2007px;top:539px;width:56px;">550</div>
<div class="gcell" style="left:2063px;top:539px;width:55px;">1</div>
<div class="gcell" style="left:2118px;top:539px;width:42px;"><div class="chk"></div></div>
<div class="abs" style="left:2159px;top:392px;width:1px;height:743px;background:#c4c4c4"></div>
<svg class="abs" style="left:1907px;top:398px" width="6" height="9" viewBox="0 0 6 9"><path d="M1 0.5L5 4.5L1 8.5z" fill="#222"/></svg>
<svg class="abs" style="left:2164px;top:397.7px" width="8" height="5" viewBox="0 0 8 5"><path d="M1 4L4 0.8L7 4z" fill="#222"/></svg>
<svg class="abs" style="left:2164px;top:1123px" width="8" height="5" viewBox="0 0 8 5"><path d="M1 1L4 4.2L7 1z" fill="#222"/></svg>
<div class="abs" style="left:1902px;top:1104px;width:258px;height:1px;background:#c4c4c4"></div>
<div class="abs" style="left:1953px;top:1108px;width:52px;height:23px;border:1px solid #c6c6c6;background:#fff;text-align:right;padding-right:4px;line-height:24px;color:#333">8</div>
<div class="abs" style="left:2064px;top:1108px;width:52px;height:23px;border:1px solid #c6c6c6;background:#fff;text-align:right;padding-right:4px;line-height:24px;color:#333">8</div>
<!--/PROPS-->
<!--STATUS-->
<div class="t" style="left:1px;top:1146px;color:#222;letter-spacing:0.18px">Wersja PEŁNA [ver. 5.0 26]</div>
<div class="abs" style="left:0;top:1159.8px;width:200px;height:29.7px;border:1px solid #c6c6c6;background:#fff;text-align:center;line-height:28.4px;color:#333">rsdachy5@zasoby.pl</div>
<div class="t c" style="left:229.7px;top:1146px;color:#222">X</div>
<div class="t c" style="left:289.8px;top:1146px;color:#222">Y</div>
<div class="t c" style="left:229.7px;top:1162px;color:#222">315</div>
<div class="t c" style="left:289.8px;top:1162px;color:#222">162</div>
<svg width="0" height="0" style="position:absolute"><defs><linearGradient id="zbg" x1="0" y1="0" x2="0" y2="1"><stop offset="0" stop-color="#f8f7e8"/><stop offset="0.505" stop-color="#efeddc"/><stop offset="0.515" stop-color="#e8edf9"/><stop offset="1" stop-color="#eef2fb"/></linearGradient><linearGradient id="zbg2" x1="0" y1="0" x2="0" y2="1"><stop offset="0" stop-color="#f3f1e2"/><stop offset="0.46" stop-color="#f0eede"/><stop offset="0.5" stop-color="#eaeffa"/><stop offset="1" stop-color="#eef2fb"/></linearGradient><linearGradient id="zgr" gradientUnits="userSpaceOnUse" x1="0" y1="8" x2="0" y2="40"><stop offset="0" stop-color="#adaa99"/><stop offset="0.48" stop-color="#9b998c"/><stop offset="0.5" stop-color="#83858c"/><stop offset="1" stop-color="#7d7f84"/></linearGradient><linearGradient id="zo2" x1="0" y1="0" x2="0" y2="1"><stop offset="0" stop-color="#e99a3e"/><stop offset="1" stop-color="#e3852a"/></linearGradient><linearGradient id="zo" x1="0" y1="0" x2="0" y2="1"><stop offset="0" stop-color="#f6c17c"/><stop offset="1" stop-color="#e58f30"/></linearGradient><linearGradient id="cg" x1="0" y1="0" x2="0" y2="1"><stop offset="0" stop-color="#b9b9b9"/><stop offset="0.5" stop-color="#9a9a9a"/><stop offset="0.52" stop-color="#7e7e7e"/><stop offset="1" stop-color="#909090"/></linearGradient></defs></svg>
<svg class="abs" style="left:1807.1px;top:1145px" width="37.6" height="46.8" viewBox="0 0 37.6 46.8"><rect x="0.55" y="0.55" width="36.5" height="45.7" rx="4.6" fill="url(#zbg)" stroke="#0b0b0b" stroke-width="1.1"/><rect x="4.2" y="9.4" width="29.6" height="29.3" fill="none" stroke="url(#zgr)" stroke-width="2"/><path d="M2.9 23.7L8.9 18.1V29.9z" fill="url(#zo)" stroke="#f6f5ec" stroke-width="2" stroke-linejoin="miter" paint-order="stroke"/><path d="M35.1 23.7L28.9 18.1V29.9z" fill="url(#zo)" stroke="#f6f5ec" stroke-width="2" stroke-linejoin="miter" paint-order="stroke"/><path d="M18.9 8.1L13 13.7H24.8z" fill="url(#zo)" stroke="#f6f5ec" stroke-width="2" stroke-linejoin="miter" paint-order="stroke"/><path d="M18.9 39.9L13 34H24.8z" fill="url(#zo2)" stroke="#f6f5ec" stroke-width="2" stroke-linejoin="miter" paint-order="stroke"/><rect x="11.9" y="17" width="13.9" height="13.9" fill="url(#zbg2)" stroke="url(#zgr)" stroke-width="2"/><rect x="15" y="19.9" width="7.7" height="8" fill="url(#zgr)"/></svg>
<svg class="abs" style="left:1847.2px;top:1145px" width="37.6" height="46.8" viewBox="0 0 37.6 46.8"><rect x="0.55" y="0.55" width="36.5" height="45.7" rx="4.6" fill="url(#zbg)" stroke="#0b0b0b" stroke-width="1.1"/><path d="M4.2 8.4V39.7M33.8 8.4V39.7" stroke="url(#zgr)" stroke-width="2"/><path d="M2.9 23.7L8.9 18.1V29.9z" fill="url(#zo)" stroke="#f6f5ec" stroke-width="2" stroke-linejoin="miter" paint-order="stroke"/><path d="M35.1 23.7L28.9 18.1V29.9z" fill="url(#zo)" stroke="#f6f5ec" stroke-width="2" stroke-linejoin="miter" paint-order="stroke"/><rect x="11.9" y="17" width="13.9" height="13.9" fill="url(#zbg2)" stroke="url(#zgr)" stroke-width="2"/><rect x="15" y="19.9" width="7.7" height="8" fill="url(#zgr)"/></svg>
<svg class="abs" style="left:1887.2px;top:1145px" width="37.6" height="46.8" viewBox="0 0 37.6 46.8"><rect x="0.55" y="0.55" width="36.5" height="45.7" rx="4.6" fill="url(#zbg)" stroke="#0b0b0b" stroke-width="1.1"/><path d="M3.2 9.4H34.8" stroke="#aaa796" stroke-width="2"/><path d="M3.2 38.7H34.8" stroke="#808288" stroke-width="2"/><path d="M18.9 8.1L13 13.7H24.8z" fill="url(#zo)" stroke="#f6f5ec" stroke-width="2" stroke-linejoin="miter" paint-order="stroke"/><path d="M18.9 39.9L13 34H24.8z" fill="url(#zo2)" stroke="#f6f5ec" stroke-width="2" stroke-linejoin="miter" paint-order="stroke"/><rect x="11.9" y="17" width="13.9" height="13.9" fill="url(#zbg2)" stroke="url(#zgr)" stroke-width="2"/><rect x="15" y="19.9" width="7.7" height="8" fill="url(#zgr)"/></svg>
<div class="abs" style="left:2006px;top:1144px;width:3px;height:50px;background:#b9b9b9"></div>
<div class="abs" style="left:2008px;top:1167.2px;width:139px;height:3px;background:#b5b5b5"></div>
<svg class="abs" style="left:1969px;top:1151px" width="35" height="35" viewBox="0 0 35 35"><circle cx="17.5" cy="17.5" r="16.2" fill="url(#cg)" stroke="#1b1b1b" stroke-width="0.8"/><rect x="7" y="15.2" width="21" height="4.6" fill="#fff"/></svg>
<svg class="abs" style="left:2149px;top:1151px" width="35" height="35" viewBox="0 0 35 35"><circle cx="17.5" cy="17.5" r="16.2" fill="url(#cg)" stroke="#1b1b1b" stroke-width="0.8"/><rect x="7" y="15.2" width="21" height="4.6" fill="#fff"/><rect x="15.2" y="7" width="4.6" height="21" fill="#fff"/></svg>
<!--/STATUS-->
</div>
<div id="vsb" class="abs" style="left:2185px;top:61px;width:16px;height:1192px;background:#fafafa;border-left:1px solid #e6e6e6"><div class="abs" style="left:4.3px;top:4px;width:7.4px;height:1171px;border-radius:4px;background:#c1c1c1"></div></div>
<!--/APP-->
</div>
</body>
</html>
